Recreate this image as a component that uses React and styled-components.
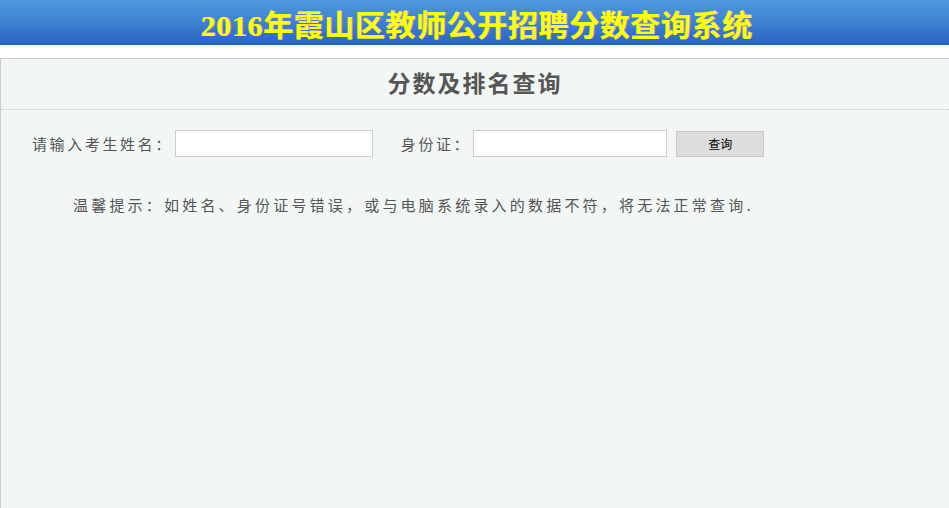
import React from 'react'
import styled, { createGlobalStyle } from 'styled-components'

const GlobalStyle = createGlobalStyle`
  html, body {
    margin: 0;
    padding: 0;
    background: #fff;
  }
  body {
    font-family: "Liberation Serif", "Noto Sans CJK SC", serif;
  }
`

const Header = styled.header`
  height: 45px;
  background: linear-gradient(to bottom, #4f98dc 0%, #3d82d2 50%, #2962c4 100%);
  display: flex;
  align-items: center;
  justify-content: center;
  border-bottom: 2px solid #eef6f3;
`

const SiteTitle = styled.h1`
  margin: 0 0 0 4px;
  font-family: "Liberation Serif", "Noto Sans CJK SC", serif;
  font-size: 30px;
  font-weight: bold;
  color: #ffff00;
  text-shadow: 1px 0 0 #d0a0c0;
  letter-spacing: 0.6px;
`

const Panel = styled.main`
  margin-top: 11px;
  border-top: 1px solid #cccccc;
  border-left: 1px solid #cccccc;
  background: #f2f7f5;
  min-height: 449px;
`

const PanelTitle = styled.h2`
  margin: 0;
  height: 50px;
  line-height: 52px;
  text-align: center;
  font-family: "Liberation Serif", "Noto Sans CJK SC", serif;
  font-size: 23px;
  font-weight: bold;
  color: #555555;
  letter-spacing: 2px;
  border-bottom: 1px dotted #c8c8c8;
`

const Form = styled.form`
  display: flex;
  align-items: center;
  padding: 20px 0 0 31px;
  color: #555555;
  font-family: "Noto Sans CJK SC", sans-serif;
  font-size: 15px;
`

const Label = styled.label`
  letter-spacing: 2.6px;
  margin-left: ${p => p.$gap || 0}px;
  margin-right: 2px;
`

const Field = styled.input`
  box-sizing: border-box;
  width: ${p => p.$w}px;
  height: 27px;
  border: 1px solid #cccccc;
  background: #ffffff;
  outline: none;
  padding: 0 4px;
`

const Button = styled.button`
  box-sizing: border-box;
  width: 88px;
  height: 26px;
  margin-left: 9px;
  border: 1px solid #c8c8c8;
  background: #dddddd;
  color: #000;
  font-family: "Noto Sans CJK SC", sans-serif;
  font-size: 12px;
`

const Hint = styled.p`
  margin: 37px 0 0 72px;
  color: #555555;
  font-family: "Noto Sans CJK SC", sans-serif;
  font-size: 15px;
  letter-spacing: 3.2px;
`

const App = () => {
  return (
    <>
      <GlobalStyle />
      <Header>
        <SiteTitle>2016年霞山区教师公开招聘分数查询系统</SiteTitle>
      </Header>
      <Panel>
        <PanelTitle>分数及排名查询</PanelTitle>
        <Form onSubmit={e => e.preventDefault()}>
          <Label>请输入考生姓名：</Label>
          <Field $w={198} />
          <Label $gap={28}>身份证：</Label>
          <Field $w={194} />
          <Button type="submit">查询</Button>
        </Form>
        <Hint>温馨提示：如姓名、身份证号错误，或与电脑系统录入的数据不符，将无法正常查询.</Hint>
      </Panel>
    </>
  )
}

export default App
